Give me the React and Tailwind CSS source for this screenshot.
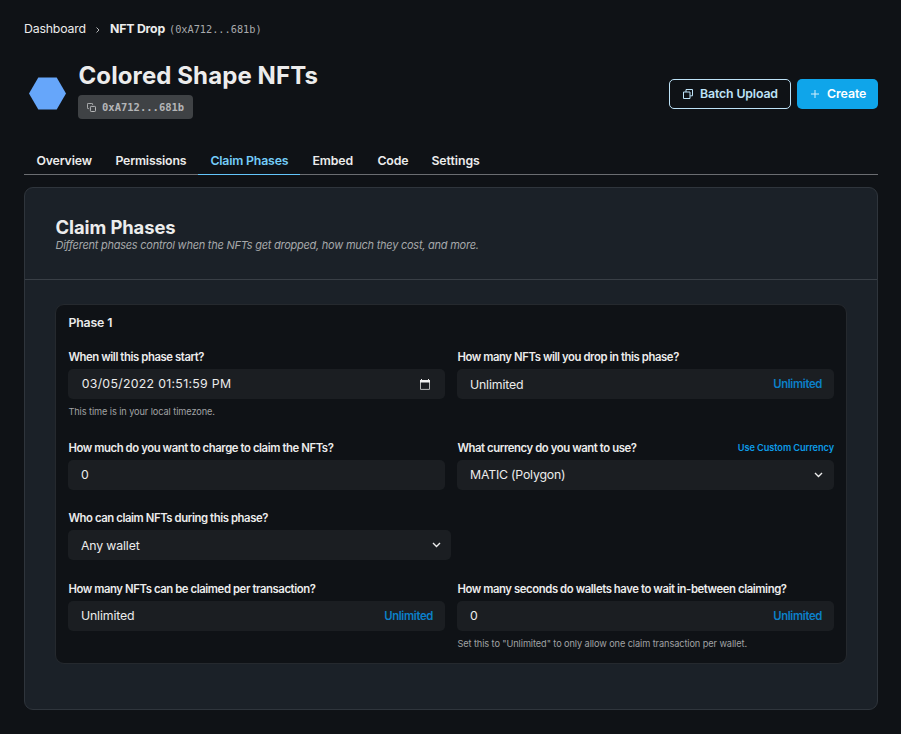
const labelClass = "flex h-[24px] items-center justify-between pl-[0.4px] text-[11.3px] font-semibold tracking-[-0.41px] whitespace-nowrap text-[#ececec]";
const inputClass = "flex h-[30px] w-full items-center justify-between rounded-[5px] bg-[#1b1e22] pr-3 pl-[13px] text-[12.3px] tracking-[-0.15px] text-[#ececec]";
const helperClass = "pl-[0.4px] text-[9.2px] leading-[26px] tracking-[-0.085px] whitespace-nowrap text-[#a0a2a4]";

function Unlimited() {
  return <button className="text-[11.3px] font-semibold tracking-[-0.34px] text-[#0b80c9]">Unlimited</button>;
}

function Chevron() {
  return (
    <svg className="-mr-px h-[6px] w-[9px]" viewBox="0 0 9 6" fill="none" stroke="#ececec" strokeWidth="1.4">
      <path d="M1 1l3.5 3.4L8 1" />
    </svg>
  );
}

function Calendar() {
  return (
    <svg className="mr-[3px] h-[11px] w-[10px]" viewBox="0 0 10 11" fill="none">
      <path d="M0.5 2h9v8.4h-9z" stroke="#b9babb" strokeLinejoin="round" />
      <path d="M0 1h10v2.6H0zM1 0h1v1H1zM8 0h1v1H8z" fill="#f0f0f0" />
    </svg>
  );
}

function CopyIcon() {
  return (
    <svg className="h-[9px] w-[9px]" viewBox="0 0 9 9" fill="none" stroke="#c4c5c6" strokeWidth="0.9">
      <path d="M1.9 5.6H1.2A.8.8 0 01.4 4.8V1.2A.8.8 0 011.2.4h3.6a.8.8 0 01.8.8v.7" />
      <rect x="3.4" y="3.4" width="5.1" height="5.1" rx="0.8" />
    </svg>
  );
}

function StackIcon() {
  return (
    <svg className="h-[10px] w-[10px]" viewBox="0 0 10 10" fill="none" stroke="#bee3f8" strokeWidth="1">
      <path d="M3 3V.5h6.5v6.3H7.2" />
      <path d="M.5 3h6.5v6.5H.5z" />
    </svg>
  );
}

const tabs = [
  { name: "Overview", width: "w-[79px]", tracking: "tracking-[-0.15px]" },
  { name: "Permissions", width: "w-[95px]", tracking: "tracking-[-0.18px]" },
  { name: "Claim Phases", width: "w-[102px]", tracking: "tracking-[-0.17px]", active: true },
  { name: "Embed", width: "w-[65px]", tracking: "tracking-[-0.1px]" },
  { name: "Code", width: "w-[54px]", tracking: "tracking-[-0.1px]" },
  { name: "Settings", width: "w-[73px]", tracking: "tracking-[-0.05px]" },
];

export default function App() {
  return (
    <div className="h-[734px] w-[901px] overflow-hidden bg-[#0f1216] px-6 pr-[23px] font-['Inter',sans-serif] text-[#ececec]">
      <nav className="flex h-[58px] items-center text-[12.3px] whitespace-nowrap">
        <span className="w-[62px] tracking-[-0.17px]">Dashboard</span>
        <svg className="mt-[2px] mr-[10px] ml-[10px] h-[6px] w-[4px]" viewBox="0 0 4 6" fill="none" stroke="#b5b6b8" strokeWidth="1">
          <path d="M0.5 0.5L3 3L0.5 5.5" />
        </svg>
        <span className="w-[59px] font-bold tracking-[-0.2px]">NFT Drop</span>
        <span className="mt-px font-['DejaVu_Sans_Mono',monospace] text-[10.25px] text-[#a9abad]">(0xA712...681b)</span>
      </nav>

      <header className="flex h-[90px] items-start justify-between">
        <div className="flex">
          <svg className="mt-[19px] ml-[5px] h-[33px] w-[37px]" viewBox="0 0 37 33">
            <path d="M9.3 0.5h18.4L37 16.5l-9.3 16H9.3L0 16.5z" fill="#66a6fa" />
          </svg>
          <div className="ml-3">
            <h1 className="h-[37px] pl-[0.5px] text-[24px] leading-[36px] font-bold tracking-[0.1px] whitespace-nowrap">Colored Shape NFTs</h1>
            <button className="flex h-[24px] w-[115px] items-center gap-[6px] rounded-[4px] bg-[#3f4245] pl-[9px] font-['DejaVu_Sans_Mono',monospace] text-[10.5px] font-bold text-[#b4b5b7]">
              <CopyIcon />
              <span className="mt-px">0xA712...681b</span>
            </button>
          </div>
        </div>
        <div className="mt-[21px] flex gap-[6px] text-[12.3px] font-semibold whitespace-nowrap">
          <button className="flex h-[30px] w-[122px] items-center gap-[7px] rounded-[5px] border border-[#bee3f8] pl-[13px] tracking-[-0.13px] text-[#bee3f8]">
            <StackIcon />
            Batch Upload
          </button>
          <button className="flex h-[30px] w-[81px] items-center gap-2 rounded-[5px] bg-[#0fa5ea] pl-[14px] tracking-[-0.05px] text-white">
            <svg className="h-[8px] w-[8px]" viewBox="0 0 8 8" stroke="#d5effc" strokeWidth="1">
              <path d="M4 0v8M0 4h8" />
            </svg>
            Create
          </button>
        </div>
      </header>

      <div className="flex h-[27px] border-b border-[#6b6d71] text-[12.3px] font-semibold whitespace-nowrap">
        {tabs.map((t) => (
          <a
            key={t.name}
            className={`flex h-[27px] items-center border-b pl-[12.4px] ${t.width} ${t.tracking} ${t.active ? "border-[#63c5fa] text-[#74cdf9]" : "border-transparent"}`}
          >
            {t.name}
          </a>
        ))}
      </div>

      <main className="mt-3 h-[523px] rounded-[9px] border border-[#2f353c] bg-[#1b2128]">
        <div className="h-[92px] border-b border-[#393f46] px-[30px] pt-[28px] whitespace-nowrap">
          <h2 className="pl-[0.5px] text-[18.4px] leading-[23px] font-bold tracking-[-0.08px]">Claim Phases</h2>
          <p className="pl-[0.5px] text-[11px] leading-[13px] tracking-[-0.245px] text-[#a6a8aa] italic">Different phases control when the NFTs get dropped, how much they cost, and more.</p>
        </div>
        <section className="mx-[30px] mt-6 h-[360px] rounded-[9px] border border-[#25292e] bg-[#0f1216] px-3">
          <h3 className="h-[40px] pl-[0.4px] text-[12.3px] leading-[36px] font-semibold tracking-[-0.15px]">Phase 1</h3>
          <div className="grid grid-cols-[377px_377px] grid-rows-[91px_70px_71px_80px] gap-x-3">
            <div>
              <label className={labelClass}>When will this phase start?</label>
              <div className={inputClass}>
                <span className="pl-[0.7px] tracking-[0.3px]">03/05/2022 01:51:59 PM</span>
                <Calendar />
              </div>
              <p className={helperClass}>This time is in your local timezone.</p>
            </div>
            <div>
              <label className={labelClass}>How many NFTs will you drop in this phase?</label>
              <div className={inputClass}><span className="mt-[2px]">Unlimited</span><Unlimited /></div>
            </div>
            <div>
              <label className={labelClass}>How much do you want to charge to claim the NFTs?</label>
              <div className={inputClass}>0</div>
            </div>
            <div>
              <label className={labelClass}>
                What currency do you want to use?
                <a className="text-[9.2px] tracking-[-0.07px] text-[#0d9be6]">Use Custom Currency</a>
              </label>
              <div className={inputClass}><span className="tracking-[-0.2px]">MATIC (Polygon)</span><Chevron /></div>
            </div>
            <div className="col-span-2 w-[383px]">
              <label className={labelClass}>Who can claim NFTs during this phase?</label>
              <div className={inputClass}><span className="mt-[2px]">Any wallet</span><span className="-mr-px flex"><Chevron /></span></div>
            </div>
            <div>
              <label className={labelClass}>How many NFTs can be claimed per transaction?</label>
              <div className={inputClass}>Unlimited<Unlimited /></div>
            </div>
            <div>
              <label className={labelClass}>How many seconds do wallets have to wait in-between claiming?</label>
              <div className={inputClass}>0<Unlimited /></div>
              <p className={helperClass}>Set this to "Unlimited" to only allow one claim transaction per wallet.</p>
            </div>
          </div>
        </section>
      </main>
    </div>
  );
}
